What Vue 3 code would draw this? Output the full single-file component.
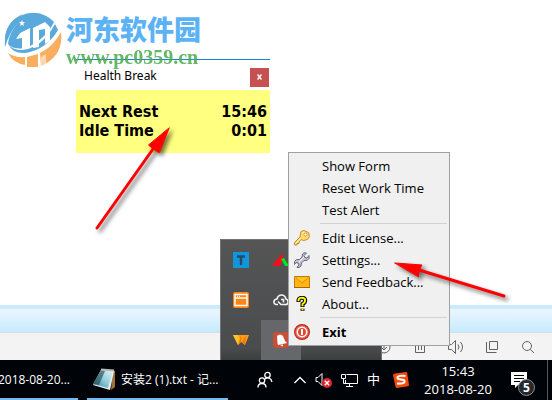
<script setup>
const menuGroups = [
  [{ label: 'Show Form' }, { label: 'Reset Work Time' }, { label: 'Test Alert' }],
  [
    { label: 'Edit License...', icon: 'key' },
    { label: 'Settings...', icon: 'wrench' },
    { label: 'Send Feedback...', icon: 'mail' },
    { label: 'About...', icon: 'help' },
  ],
  [{ label: 'Exit', icon: 'power', strong: true }],
]
const readings = [
  { name: 'Next Rest', value: '15:46' },
  { name: 'Idle Time', value: '0:01' },
]
</script>

<template>
  <div class="desktop">
    <main class="page"></main>
    <div class="band"></div>
    <div class="status">
      <svg width="16" height="16" viewBox="0 0 16 16"><circle cx="8" cy="8" r="6" /><path d="M8 4v7M5 8l3 3 3-3" /></svg>
      <svg width="16" height="16" viewBox="0 0 16 16"><path d="M2 3.500h12M5.500 3V1.500h5V3M3.500 4v9.500h9V4M6.500 6v5M9.500 6v5" /></svg>
      <svg width="16" height="16" viewBox="0 0 16 16"><path d="M.5 5.500h3l4-4v13l-4-4h-3zM10 5.500q2 2.500 0 5M12.500 3q4 5 0 10" /></svg>
      <svg width="16" height="16" viewBox="0 0 16 16"><path d="M5.500 2.500h8v8h-8zM2.500 3v10.500h10" /></svg>
      <svg width="16" height="16" viewBox="0 0 16 16"><circle cx="7" cy="7" r="4.500" /><path d="M10.300 10.300 14 14" /></svg>
    </div>

    <footer class="taskbar">
      <button class="task first">2018-08-20...</button>
      <button class="task second">
        <svg width="24" height="24" viewBox="0 0 24 24">
          <defs><linearGradient id="note" x1="0" y1="1" x2="1" y2="0"><stop offset="0" stop-color="#277f93" /><stop offset=".5" stop-color="#91cfda" /><stop offset="1" stop-color="#e6f4f6" /></linearGradient></defs>
          <path d="M20 3l2 1v16l-4 3z" fill="#9d7138" />
          <path d="M8 3l13 1-4 19L0 18z" fill="#e9f0f1" />
          <path d="M8 3l12 1-5 17L0 17z" fill="url(#note)" />
          <path d="M8 3L0 17l6 1L12 4z" fill="#17333c" opacity=".55" />
          <path d="M8 2.500l13 1" stroke="#b8b8b8" stroke-width="2" />
        </svg>
        <span>安装2 (1).txt - 记...</span>
      </button>
      <div class="tray">
        <svg class="people" width="16" height="18" viewBox="0 0 16 18" fill="none" stroke="#fff" stroke-width="1.300"><circle cx="10.500" cy="4" r="2.700" /><circle cx="5" cy="9.500" r="2.700" /><path d="M1 16.500q0-4 4-4t4 4M8 8q3-2.500 6 .5l1 2.500" /></svg>
        <svg class="chevron" width="12" height="8" viewBox="0 0 12 8" fill="none" stroke="#fff" stroke-width="1.300"><path d="M.5 7 6 1.500 11.500 7" /></svg>
        <svg width="17" height="16" viewBox="0 0 17 16"><path d="M1 5.500h2l4-4v12l-4-4H1z" fill="none" stroke="#fff" /><circle cx="12" cy="11" r="5" fill="#dc2430" /><path d="M9.800 8.800l4.400 4.400m0-4.400-4.400 4.400" stroke="#fff" stroke-width="1.400" /></svg>
        <svg width="17" height="16" viewBox="0 0 17 16" fill="none" stroke="#fff"><path d="M5.500 2.500h11v9h-12V8M8.500 12v2M5 14.500h7M.5 2.500h4v4h-4zM2.500 7v4.500H5" /></svg>
        <span class="ime">中</span>
        <svg class="sogou" width="16" height="16" viewBox="0 0 16 16"><path d="M2 1.500 13 0q1 0 1.200 1L16 13q0 1-1 1.200L4 16q-1 0-1.400-1L0 3q0-1 2-1.500z" fill="#f6490c" /><path d="M12.500 4Q5 3 4.500 5.500C4 8.500 12 6.500 11.500 9.700Q11 12 4 11.500" fill="none" stroke="#fff" stroke-width="2.200" /></svg>
      </div>
      <div class="clock"><span>15:43</span><span>2018-08-20</span></div>
      <div class="notice">
        <svg width="16" height="16" viewBox="0 0 16 16"><path d="M0 0h16v13H7l-3 3v-3H0z" fill="#fff" /><path d="M3 3.500h10M3 6.500h10M3 9.500h6" stroke="#000" /></svg>
        <span class="count">5</span>
      </div>
      <div class="peek"></div>
    </footer>

    <section class="health">
      <header>
        <span>Health Break</span>
        <button class="close" aria-label="Close"><svg width="5" height="6" viewBox="0 0 5 6"><path d="M.5.5l4 5m0-5-4 5" stroke="#fff" stroke-width="1.500" /></svg></button>
      </header>
      <dl>
        <div v-for="r in readings" :key="r.name"><dt>{{ r.name }}</dt><dd>{{ r.value }}</dd></div>
      </dl>
    </section>

    <div class="brand">
      <svg width="58" height="58" viewBox="0 0 58 58">
        <path d="M5 17A28 28 0 0 1 50 12Q42 29 22 38 9 40 4 34 5 23 14 13 6 21 1 37 0 26 5 17z" fill="#5aa9dc" />
        <path d="M1 37Q1 18 19 4 4 10 1 26z" fill="#5aa9dc" />
        <path d="M51 14Q38 38 18 40 8 40 4 34 9 44 21 43 42 40 54 20z" fill="#5aa9dc" />
        <path d="M4 43Q11 48 21 47V55Q9 53 4 43z" fill="#f8ad5f" />
        <path d="M23 47 34 44V57H23zM36 43Q49 37 57 22 60 46 37 56z" fill="#f8ad5f" />
        <path d="M12 29 16 23 26 18V38L18 39V28zM29 24 29 18 41 12 46 17V31L41 34V19L35 20V37L29 38z" fill="#fff" />
        <path d="M37 47l5-3v10l-5 2z" fill="#fff" opacity=".5" />
        <path d="M18 10l.8 2 2.200.2-1.700 1.500.6 2.200-1.900-1.200-1.900 1.200.6-2.200-1.700-1.500 2.200-.2z" fill="#fff" />
      </svg>
      <div class="words"><strong>河东软件园</strong><span>www.pc0359.cn</span></div>
    </div>

    <section class="overflow">
      <div class="cell"><svg width="16" height="16" viewBox="0 0 16 16"><path d="M0 0h16v16H0z" fill="#1296db" /><path d="M4 4.500h8M8 4.500V13" stroke="#244a68" stroke-width="2.400" /></svg></div>
      <div class="cell"><svg width="16" height="16" viewBox="0 0 16 16"><path d="M-2 14 10 1v6l-3 7z" fill="#f0101c" /><path d="M8 7l3-1 5 8h-4z" fill="#00e51c" /></svg></div>
      <div class="cell blank"></div><div class="cell blank"></div>
      <div class="cell"><svg width="16" height="16" viewBox="0 0 16 16"><rect width="16" height="16" rx="2" fill="#ff8416" /><path d="M2 2.500h12v11H2zM2 6h12" fill="none" stroke="#fff" stroke-width="1.400" /><path d="M4 4.300h4" stroke="#fff" stroke-dasharray="1 1" /></svg></div>
      <div class="cell"><svg width="16" height="16" viewBox="0 0 16 16" fill="none" stroke="#f3f3f3" stroke-width="1.600"><path d="M5 12.500H3Q.5 12 1 9.500T4 7q1-4 4.500-4T13 7q2.500 1 2 3.500t-3 2H8L5 9.500M8 7.500h2.500v3" /></svg></div>
      <div class="cell blank"></div><div class="cell blank"></div>
      <div class="cell"><svg width="16" height="16" viewBox="0 0 16 16"><path d="M0 3h16l-4 10-4-3-3 3z" fill="#ff9d13" /><path d="M0 3h5l3 6-3 4z" fill="#ffc123" /><path d="M8 3v7l-3 3zM13 3l-1 10-3-3z" fill="#ef7914" /></svg></div>
      <div class="cell hover"><svg width="16" height="16" viewBox="0 0 16 16"><rect width="16" height="16" rx="3" fill="#c84f37" /><path d="M4 4q3-3 6 0l2 5 2 2-9 2-.5-2z" fill="#fff" /><path d="M7 13l3-.5v2z" fill="#fff" /></svg></div>
    </section>

    <nav class="menu">
      <ul v-for="(group, i) in menuGroups" :key="i">
        <li v-for="item in group" :key="item.label">
          <button :class="{ strong: item.strong }">
            <span class="glyph">
              <svg v-if="item.icon === 'key'" width="16" height="16" viewBox="0 0 16 16"><path d="M7 1.500l3-1 4.500 2 1 4-2 3-4 1L7 9.500 5 12v1.500H3V15H.5v-2.500L6 7z" fill="#ffdb69" stroke="#c58a32" /><path d="M2 13l5-5M8 3l2-1" stroke="#fff5b8" /><circle cx="11.500" cy="4.500" r="1.500" fill="#fff" stroke="#c58a32" stroke-width=".8" /></svg>
              <svg v-else-if="item.icon === 'wrench'" width="16" height="16" viewBox="0 0 16 16"><path d="M12.500 1 10 3.500l1 2 2 .5 2-2.500v3L13 8.500h-3l-2.500 2.500-.5 3-2 1.500H3L5 13l-1-2-2-.5-1.500 2v-3L2.500 7.500H5.500L8 5l.5-3L10 .8z" fill="#bfc1d2" stroke="#67697d" /><path d="M5 10l5-5" stroke="#fff" /></svg>
              <svg v-else-if="item.icon === 'mail'" width="16" height="16" viewBox="0 0 16 16"><path d="M.5 2.500h15v11H.5z" fill="#ffb60e" stroke="#c47c11" /><path d="M2 4l6 5 6-5" fill="#ffc62c" stroke="#df8b0a" /><path d="M0 13.500h16" stroke="#a86410" /></svg>
              <svg v-else-if="item.icon === 'help'" width="16" height="16" viewBox="0 0 16 16"><path d="M4.500 6V4Q5 1.800 8 1.800T11.200 4.500Q11.200 6.500 8.500 8v3M8.500 12.800v2" fill="none" stroke="#000" stroke-width="4" /><path d="M4.500 5.300V4Q5 1.800 8 1.800T11.200 4.500Q11.200 6.500 8.500 8v2.300M8.500 12.800v1.400" fill="none" stroke="#fff200" stroke-width="2" /></svg>
              <svg v-else-if="item.icon === 'power'" width="16" height="16" viewBox="0 0 16 16"><circle cx="8" cy="8" r="7.400" fill="#f1604a" stroke="#b92d22" stroke-width="1.200" /><circle cx="8" cy="8" r="4.700" fill="#e3452f" stroke="#fff" stroke-width="1.500" /><path d="M8 5v6" stroke="#fff" stroke-width="2" /></svg>
            </span><span>{{ item.label }}</span>
          </button>
        </li>
      </ul>
    </nav>

    <svg class="arrow to-time" width="90" height="120" viewBox="0 0 90 120"><path d="M7 108 63 29" /><path class="head" d="M79 8 58.500 25l4 3.500 6.500 4z" /></svg>
    <svg class="arrow to-settings" width="125" height="50" viewBox="0 0 125 50"><path d="M29 18 114 44" /><path class="head" d="M5 11l27 2-3 5.500-.5 6z" /></svg>
  </div>
</template>

<style>
body { margin: 0; }
</style>

<style scoped>
.desktop { position: relative; display: flex; flex-direction: column; min-height: 100vh; overflow: hidden; background: #fff; font-family: "Open Sans", "Noto Sans", "Noto Sans CJK SC", sans-serif; font-size: 12px; color: #000; }
.desktop * { box-sizing: border-box; }
svg { display: block; flex: none; }
button { margin: 0; border: 0; padding: 0; background: none; color: inherit; font: inherit; text-align: left; }
.page { flex: 1; }
.band { height: 28px; border-top: 4px solid #c8edff; border-bottom: 1px solid #dcdfe1; background: linear-gradient(#edf5fe, #c5ebff); }
.status { height: 27px; padding: 0 16px; display: flex; align-items: center; justify-content: flex-end; gap: 20px; background: #f3f3f3; }
.status svg { fill: none; stroke: #626262; }
.taskbar { height: 40px; display: flex; align-items: stretch; background: #000308; color: #fff; }
.task { height: 40px; border-bottom: 2px solid #76b9ed; white-space: nowrap; }
.first { width: 78px; margin-right: 9px; display: flex; align-items: center; justify-content: flex-end; padding-right: 8px; overflow: hidden; }
.second { width: 141px; display: flex; align-items: center; gap: 4px; padding-left: 6px; }
.tray { display: flex; align-items: center; flex: 1; justify-content: flex-end; gap: 9px; }
.people { margin-right: 12px; }
.ime { width: 13px; font-size: 13px; line-height: 18px; padding-bottom: 2px; text-align: center; }
.sogou { margin-left: 4px; }
.clock { width: 98px; display: flex; flex-direction: column; justify-content: center; align-items: center; font-size: 13px; line-height: 18px; }
.notice { position: relative; width: 40px; padding: 12px 4px; }
.count { position: absolute; left: 11px; top: 19px; width: 17px; height: 17px; border: 1px solid #8d8f91; border-radius: 50%; background: #26292b; font-size: 12px; font-weight: 700; line-height: 15px; text-align: center; }
.peek { width: 5px; border-left: 1px solid #54585b; }

.health { position: absolute; left: 76px; top: 59px; width: 194px; border-top: 1px solid #1883d7; background: #fff; }
.health header { height: 30px; display: flex; align-items: center; justify-content: space-between; padding: 0 1px 0 8px; font-family: "Noto Sans", sans-serif; }
.close { width: 19px; height: 19px; margin-top: 4px; display: flex; align-items: center; justify-content: center; background: #c75050; }
dl { margin: 0; padding: 12px 3px 13px; background: #ffff80; font-family: "DejaVu Sans Condensed", "Noto Sans", sans-serif; font-size: 16px; font-weight: 700; line-height: 19px; }
dl div { display: flex; justify-content: space-between; }
dd { margin: 0; }

.brand { position: absolute; left: 4px; top: 10px; display: flex; gap: 4px; }
.words { display: flex; flex-direction: column; padding-top: 2px; }
.words strong { color: #5bb2f5; font-family: "Noto Sans CJK SC", sans-serif; font-size: 27px; font-weight: 900; line-height: 34px; }
.words span { color: #4fae4f; opacity: .88; font-family: "Liberation Serif", serif; font-size: 20px; font-weight: 700; line-height: 22px; }

.overflow { position: absolute; left: 220px; bottom: 40px; width: 162px; border: 1px solid #747474; border-bottom: 0; display: grid; grid-template-columns: repeat(4, 40px); grid-auto-rows: 40px; background: linear-gradient(#555, #4d4f50 60%, #494b4d 90%, #3c3e40); }
.cell { display: flex; align-items: center; justify-content: center; }
.hover { background: #65676a; }

.menu { position: absolute; left: 288px; top: 152px; width: 162px; padding: 2px; border: 1px solid #a0a0a0; background: #f0f0f0; font-size: 13px; }
.menu ul { margin: 0; padding: 0; list-style: none; }
.menu ul + ul::before { content: ""; display: block; height: 1px; margin: 2px 0 3px 29px; background: #d2d2d2; }
.menu button { width: 100%; height: 22px; display: flex; align-items: center; line-height: 18px; white-space: nowrap; }
.glyph { width: 31px; padding-left: 3px; }
.strong { font-weight: 700; }

.arrow { position: absolute; pointer-events: none; overflow: visible; fill: none; stroke: #f00; stroke-width: 3; stroke-linecap: round; filter: drop-shadow(3px 3px 2px rgba(0, 0, 0, .55)); }
.arrow .head { fill: #f00; stroke-width: 1; }
.to-time { left: 90px; top: 120px; }
.to-settings { left: 390px; top: 252px; }
</style>
